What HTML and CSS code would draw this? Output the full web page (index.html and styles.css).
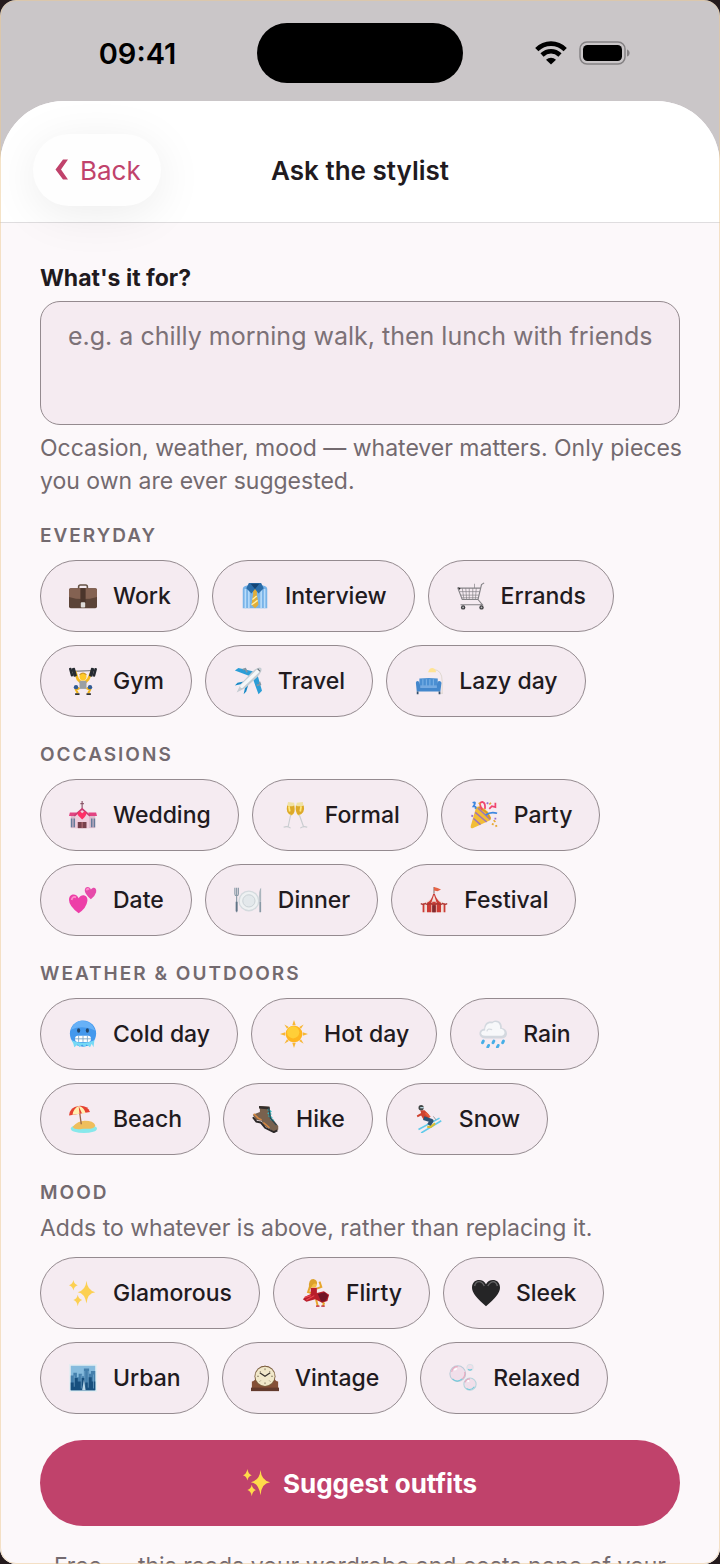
FILE: index.html
```html
<!DOCTYPE html>
<html lang="en">

<head>
  <meta charset="UTF-8">
  <meta name="viewport" content="width=device-width, initial-scale=1.0">
  <title>Ask the stylist</title>
  <link rel="stylesheet" href="styles.css">
</head>

<body>
  <div class="phone">
    <div class="status-bar">
      <div class="status-time">09:41</div>
      <div class="island"></div>
      <div class="status-icons">
        <svg class="wifi" viewBox="0 0 32 24" aria-hidden="true">
          <path d="M1.800 8.600C9.800 .6 22.200 .6 30.200 8.600" fill="none" stroke="#000" stroke-width="4.600" />
          <path d="M7 14C12.300 9 19.700 9 25 14" fill="none" stroke="#000" stroke-width="4.600" />
          <path d="M16 23.500L11 18.700C14 16 18 16 21 18.700Z" />
        </svg>
        <svg class="battery" viewBox="0 0 51 24" aria-hidden="true">
          <rect x="1" y="1" width="45" height="22" rx="7" fill="none" stroke="#858284" stroke-width="1.500" />
          <rect x="4" y="4" width="39" height="16" rx="4.500" />
          <path d="M48 8.500C51.500 9.500 51.500 14.500 48 15.500Z" fill="#858284" />
        </svg>
      </div>
    </div>

    <div class="sheet">
      <header class="header">
        <button class="back" type="button">
          <svg viewBox="0 0 14 22" aria-hidden="true"><path d="M13 .5H8L.5 10.500L8 20.500H13L6 10.500Z" fill="#c0426b" /></svg>
          Back
        </button>
        <h1>Ask the stylist</h1>
      </header>

      <main class="content">
        <label class="label" for="occasion">What's it for?</label>
        <textarea id="occasion" class="prompt" placeholder="e.g. a chilly morning walk, then lunch with friends"></textarea>
        <p class="hint">Occasion, weather, mood — whatever matters. Only pieces you own are ever suggested.</p>

        <section class="group">
          <h2>Everyday</h2>
          <div class="chips">
            <button class="chip" type="button">
              <svg viewBox="0 0 32 32" aria-hidden="true">
                <path d="M11 9V5.500Q11 3.500 13 3.500H19Q21 3.500 21 5.500V9" fill="none" stroke="#665447" stroke-width="1.800" />
                <rect x="0" y="7" width="32" height="23" rx="2" fill="#5b4337" />
                <path d="M0 9Q0 7 2 7H30Q32 7 32 9V17Q16 22 0 17Z" fill="#846252" />
                <rect x="13" y="7" width="6" height="17" fill="#4b352b" />
                <rect x="13.500" y="23" width="5" height="6" rx="1" fill="#dedbd8" />
              </svg>
              Work
            </button>
            <button class="chip" type="button">
              <svg viewBox="0 0 32 32" aria-hidden="true">
                <path d="M2 8Q2 5 7 4L16 2L25 4Q30 5 30 8V30H2Z" fill="#78b3e8" />
                <path d="M5 8V30M9 8V30M23 8V30M27 8V30" stroke="#b9dcfa" stroke-width="1.800" />
                <path d="M13 8L16 6L19 8L18 13L20 26L16 30L12 26L14 13Z" fill="#e1ae38" />
                <path d="M13 20L18 16M12 26L19 21" stroke="#fff0a8" stroke-width="1.600" />
                <path d="M9 1H23L26 7L20 13L16 8L12 13L6 7Z" fill="#2b6da9" />
                <path d="M11 2H21L16 8Z" fill="#154575" />
              </svg>
              Interview
            </button>
            <button class="chip" type="button">
              <svg viewBox="0 0 32 32" aria-hidden="true">
                <g fill="none" stroke="#858387">
                  <path d="M31 1L28 3L24 20H6L1 7H27M4 26H29L24 20" stroke-width="1.300" />
                  <path d="M3 11H26M4 15H25M5 18H25M6 7L8 20M10 7L11 20M14 7V20M18 7V20M22 7L21 20M20 2V7" stroke-width=".8" />
                </g>
                <path d="M1 6L4 7L3 9Z" fill="#222" />
                <g fill="#3d3d40"><circle cx="7" cy="29" r="2.500" /><circle cx="28" cy="29" r="2.500" /></g>
                <g fill="#bbb"><circle cx="7" cy="29" r="1" /><circle cx="28" cy="29" r="1" /></g>
              </svg>
              Errands
            </button>
            <button class="chip" type="button">
              <svg viewBox="0 0 32 32" aria-hidden="true">
                <path d="M3 5L29 4" stroke="#777" stroke-width="1.200" />
                <path d="M7 5L10 14L13 17H19L22 14L26 5" fill="none" stroke="#f4b91d" stroke-width="3" />
                <circle cx="16" cy="11" r="4" fill="#ffc928" />
                <path d="M12 9Q16 5 20 9" fill="none" stroke="#d39a20" stroke-width="1.200" />
                <path d="M12 16H20L20 25H12Z" fill="#9a9fa3" />
                <path d="M12 24L8 26L10 30M20 24L24 26L22 30" fill="none" stroke="#f1b51c" stroke-width="2.500" />
                <path d="M7 31H12M20 31H25" stroke="#333" stroke-width="2" />
                <g fill="#252a31"><rect x="1" y="1" width="3" height="10" rx="1" transform="rotate(-15 2 6)" /><rect x="4" y="1" width="4" height="10" rx="1" transform="rotate(-15 6 6)" /><rect x="24" y="1" width="4" height="10" rx="1" transform="rotate(15 26 6)" /><rect x="28" y="1" width="3" height="10" rx="1" transform="rotate(15 29 6)" /></g>
                <g fill="#315b94"><circle cx="8" cy="23" r="2.500" /><circle cx="24" cy="23" r="2.500" /></g>
              </svg>
              Gym
            </button>
            <button class="chip" type="button">
              <svg viewBox="0 0 32 32" aria-hidden="true">
                <path d="M20 11L1 4L5 1L26 6ZM21 12L28 31L32 27L26 6Z" fill="#2b9ed7" />
                <path d="M10 19L1 21L4 18L14 16ZM13 22L11 31L14 28L17 18Z" fill="#1689c6" />
                <path d="M3 29L8 19L21 5Q28 -1 31 1Q33 4 27 11L13 24Z" fill="#c4ccd2" />
                <path d="M9 22L28 4" stroke="#f5f7f8" stroke-width="4" stroke-linecap="round" />
                <path d="M10 3L13 2L15 6M29 17L30 20L26 21" fill="none" stroke="#8297a5" stroke-width="2" />
                <path d="M27 2L30 5" stroke="#6d7780" stroke-width="1.500" />
              </svg>
              Travel
            </button>
            <button class="chip" type="button">
              <svg viewBox="0 0 32 32" aria-hidden="true">
                <path d="M21 3Q31 3 31 16V30M28 30H32" fill="none" stroke="#ddd5cc" stroke-width="1" />
                <path d="M15 6Q16 1 20 1Q24 2 24 6Z" fill="#ffe394" />
                <path d="M5 13Q16 12 26 13V23H5Z" fill="#4b8fd2" />
                <path d="M9 14V22M13 14V22M17 14V22M21 14V22" stroke="#79b1e6" stroke-width="1.200" />
                <path d="M1 18Q1 16 3 16Q5 16 6 22H25Q25 16 28 16Q31 17 30 20L29 28H2Z" fill="#4387cc" />
                <path d="M6 21H25V24H6Z" fill="#75aae1" />
                <path d="M3 28V31M28 28V31" stroke="#33506d" stroke-width="2" />
              </svg>
              Lazy day
            </button>
          </div>
        </section>

        <section class="group">
          <h2>Occasions</h2>
          <div class="chips">
            <button class="chip" type="button">
              <svg viewBox="0 0 32 32" aria-hidden="true">
                <path d="M15 0V10M13 3H17" stroke="#885567" stroke-width="1.300" />
                <path d="M2 15H30V31H2Z" fill="#dbbccd" /><path d="M7 15L15 8L23 15V31H7Z" fill="#efcddd" />
                <path d="M1 13H9L7 17H0ZM22 13H31L32 17H24Z" fill="#e24482" />
                <path d="M6 17L15 9L24 17" fill="none" stroke="#c93c72" stroke-width="2" />
                <path d="M3 20V30M6 20V30M26 20V30M29 20V30" stroke="#667b9b" stroke-width="1.800" />
                <path d="M15 21L10 16Q9 12 13 12L15 14Q19 10 20 14Q20 17 15 21Z" fill="#ff2f67" />
                <path d="M10 24H20V31H10Z" fill="#78404c" /><path d="M15 24V31" stroke="#c47880" />
              </svg>
              Wedding
            </button>
            <button class="chip" type="button">
              <svg viewBox="0 0 32 32" aria-hidden="true">
                <path d="M8 1L15 2Q18 13 12 17Q4 14 8 1ZM25 1L18 2Q15 13 20 17Q28 14 25 1Z" fill="#f0e2a5" />
                <path d="M7 5Q11 7 15 5Q17 14 12 16Q5 14 7 5ZM17 5Q21 7 26 5Q28 14 20 16Q16 13 17 5Z" fill="#dda929" />
                <path d="M9 6L10 12M23 6L22 12" stroke="#ffe77b" stroke-width="2" />
                <path d="M11 16L8 30M21 16L26 30M3 30Q7 28 11 31M22 31Q26 28 30 30" fill="none" stroke="#c9cdd0" stroke-width="1.300" />
              </svg>
              Formal
            </button>
            <button class="chip" type="button">
              <svg viewBox="0 0 32 32" aria-hidden="true">
                <path d="M7 7Q12 4 20 12Q26 20 23 22L3 31Q0 32 1 28Z" fill="#f2bd36" />
                <path d="M6 13L19 24M4 20L12 27M9 8L23 21" stroke="#a276b4" stroke-width="1.800" />
                <path d="M10 7L19 13L23 20" fill="none" stroke="#d79b24" stroke-width="2" />
                <path d="M18 16Q23 12 31 14M3 2Q8 0 4 6Q8 6 6 9" fill="none" stroke="#3d87e0" stroke-width="2" />
                <path d="M14 10Q9 2 14 1Q18 2 17 9M22 9L25 6L29 7V2" fill="none" stroke="#ef456f" stroke-width="2" />
                <path d="M10 2L12 4M22 4L24 2M27 22L29 24M25 26L27 27M29 29L31 28" stroke="#e7a830" stroke-width="2" />
                <path d="M19 2L21 3M28 20L30 20M2 18L3 16" stroke="#966ed0" stroke-width="2" />
              </svg>
              Party
            </button>
            <button class="chip" type="button">
              <svg viewBox="0 0 32 32" aria-hidden="true">
                <path d="M11 31Q0 23 0 16C0 8 9 8 11 14C14 8 22 10 21 17Q20 25 11 31Z" fill="#ed3fa8" />
                <path d="M25 15Q18 9 18 5C18 0 24 0 25 4C28 0 32 2 31 7Q30 11 25 15Z" fill="#e64aaa" />
                <path d="M3 16Q4 11 8 13M20 5Q21 2 23 4" fill="none" stroke="#ff8bca" stroke-width="2" />
              </svg>
              Date
            </button>
            <button class="chip" type="button">
              <svg viewBox="0 0 32 32" aria-hidden="true">
                <circle cx="17" cy="17" r="12" fill="#d4dade" /><circle cx="17" cy="17" r="10.500" fill="#eef1f2" /><circle cx="17" cy="17" r="7" fill="#e3e8eb" stroke="#c6ced2" />
                <path d="M1 2V9Q1 11 3 11Q5 11 5 9V2M3 2V30" fill="none" stroke="#8999a6" stroke-width="1.300" />
                <path d="M3 18V29" stroke="#607486" stroke-width="2.200" /><path d="M31 2Q28 3 29 18H31Z" fill="#aab5bd" /><path d="M30 18V30" stroke="#8999a6" stroke-width="2" />
              </svg>
              Dinner
            </button>
            <button class="chip" type="button">
              <svg viewBox="0 0 32 32" aria-hidden="true">
                <path d="M16 1V11" stroke="#8b6a61" stroke-width="1.200" /><path d="M16 1Q20 2 24 4L20 6L16 5Z" fill="#e66345" />
                <path d="M16 8Q15 15 3 20V30H29V20Q18 15 16 8Z" fill="#f0dfdb" />
                <path d="M15 9Q13 17 8 19V30H13V19L16 10L19 19V30H24V19Q19 16 17 9ZM3 20H5V30H3ZM27 20H29V30H27ZM14 18H18V30H14Z" fill="#cc3b35" />
                <path d="M1 20Q3 22 6 20Q8 22 12 20Q16 22 20 20Q24 22 26 20Q29 22 31 20" fill="none" stroke="#ad3834" stroke-width="1.600" />
                <path d="M14 22H18V30H14Z" fill="#812b30" />
              </svg>
              Festival
            </button>
          </div>
        </section>

        <section class="group">
          <h2>Weather &amp; outdoors</h2>
          <div class="chips">
            <button class="chip" type="button">
              <svg viewBox="0 0 32 32" aria-hidden="true">
                <circle cx="16" cy="15.500" r="15" fill="#4398ed" /><path d="M2 11Q7 0 16 1Q26 1 30 12Q16 5 2 11Z" fill="#67b1f7" />
                <ellipse cx="11" cy="12" rx="1.800" ry="2.500" fill="#244669" /><ellipse cx="21" cy="12" rx="1.800" ry="2.500" fill="#244669" />
                <path d="M3 23Q16 29 29 23L28 31L26 27L24 31L20 28L18 31L15 28L12 31L10 28L6 31L5 27Z" fill="#76d9f5" />
                <rect x="7" y="18" width="18" height="7" rx="3" fill="#fff" /><path d="M7 21.500H25M11 18V25M16 18V25M21 18V25" stroke="#7da6c6" stroke-width="1" />
              </svg>
              Cold day
            </button>
            <button class="chip" type="button">
              <svg viewBox="0 0 32 32" aria-hidden="true">
                <path d="M16 0L18 6H14ZM27 5L24 10L22 8ZM32 16L26 18V14ZM27 27L22 24L24 22ZM16 32L14 26H18ZM5 27L8 22L10 24ZM0 16L6 14V18ZM5 5L10 8L8 10Z" fill="#f7b636" />
                <circle cx="16" cy="16" r="9.500" fill="#ffb51f" /><circle cx="15" cy="14" r="7" fill="#ffcf38" />
              </svg>
              Hot day
            </button>
            <button class="chip" type="button">
              <svg viewBox="0 0 32 32" aria-hidden="true">
                <path d="M7 21C-2 21-1 10 6 10C6 4 10 1 15 2C21-2 27 3 26 9C34 10 34 21 26 21Z" fill="#d3d8df" />
                <path d="M7 18C1 18 1 12 7 12C7 5 11 3 15 4C20 0 25 4 24 10C30 10 31 17 26 18Z" fill="#f7f8fa" />
                <path d="M9 13Q10 9 15 11" fill="none" stroke="#d8dce2" stroke-width="1.500" />
                <path d="M5 24L4 26M11 29L10 31M17 24L16 26M22 29L21 31M28 24L27 26" stroke="#46aee7" stroke-width="3.200" stroke-linecap="round" />
              </svg>
              Rain
            </button>
            <button class="chip" type="button">
              <svg viewBox="0 0 32 32" aria-hidden="true">
                <ellipse cx="17" cy="27" rx="15" ry="5" fill="#87e8eb" /><path d="M4 25Q10 18 18 18Q28 18 30 23Q30 28 16 27Q7 29 4 25Z" fill="#efbe5c" />
                <path d="M12 7L14 22" stroke="#9b6545" stroke-width="1.500" />
                <path d="M0 12Q1 2 11 1Q21 0 24 8L12 10Z" fill="#e54232" /><path d="M4 11Q5 4 11 1L12 10ZM11 1Q17 2 19 9L15 10Z" fill="#fff0b1" />
              </svg>
              Beach
            </button>
            <button class="chip" type="button">
              <svg viewBox="0 0 32 32" aria-hidden="true">
                <path d="M9 1L20 2L22 14L30 24V28L26 31L13 23L11 18L4 17L1 11L9 8Z" fill="#78614e" />
                <path d="M8 1L20 2L20 5L8 4Z" fill="#332d2b" /><path d="M1 14L5 19L10 20L15 26L25 31L29 29" fill="none" stroke="#2b2728" stroke-width="2.200" />
                <path d="M2 10L7 15L11 17M13 20L20 26" fill="none" stroke="#d88840" stroke-width="1.800" />
                <path d="M18 5L22 8M18 9L22 11M19 12L23 15M21 16L25 18" stroke="#36b5bd" stroke-width="2" />
                <path d="M19 3L21 15L28 23" fill="none" stroke="#2d444d" stroke-width="1.500" />
              </svg>
              Hike
            </button>
            <button class="chip" type="button">
              <svg viewBox="0 0 32 32" aria-hidden="true">
                <path d="M4 28L28 15M7 32L30 18" stroke="#60caea" stroke-width="1.800" />
                <path d="M6 6L11 6L16 11L16 16L10 17L7 12L3 14L2 12L7 9Z" fill="#cf4230" /><circle cx="7" cy="3" r="3" fill="#424646" />
                <path d="M10 15L19 18L16 23" fill="none" stroke="#2d5274" stroke-width="4.500" stroke-linejoin="round" />
                <path d="M14 25H18L23 21" fill="none" stroke="#d8bd31" stroke-width="2.500" /><path d="M21 13L24 17" stroke="#88949a" stroke-width="1" />
                <path d="M12 9L17 14" stroke="#e65b3a" stroke-width="2.500" /><path d="M6 3H10" stroke="#b6d5df" stroke-width="1.500" />
              </svg>
              Snow
            </button>
          </div>
        </section>

        <section class="group">
          <h2>Mood</h2>
          <p class="group-note">Adds to whatever is above, rather than replacing it.</p>
          <div class="chips">
            <button class="chip" type="button">
              <svg viewBox="0 0 32 32" aria-hidden="true"><path d="M20 2Q21 13 30 15Q21 16 20 28Q18 16 10 15Q19 13 20 2ZM5 1Q6 6 10 7Q6 8 5 13Q4 8 0 7Q4 6 5 1ZM10 18Q11 23 15 24Q11 25 10 31Q9 25 5 24Q9 23 10 18Z" fill="#fcd052" /></svg>
              Glamorous
            </button>
            <button class="chip" type="button">
              <svg viewBox="0 0 32 32" aria-hidden="true">
                <path d="M9 9L7 15L11 16M17 11L22 9L20 3M16 23L18 31M21 23L25 28L24 31" fill="none" stroke="#e7a62d" stroke-width="2.300" />
                <path d="M10 10H17L17 16L25 14L31 18L29 25L23 27L15 23L5 26L1 23L4 20L10 17Z" fill="#b91e2c" />
                <path d="M18 17L26 15L30 19L27 25L22 26Z" fill="#711528" />
                <path d="M3 21L10 19M5 24L14 19" stroke="#ec4851" stroke-width="1.300" />
                <circle cx="13" cy="6" r="4" fill="#f5bd42" /><path d="M8 10Q7 0 13 0Q18 1 17 6Q13 3 10 11Z" fill="#dca12c" />
                <path d="M16 31H20M22 31H26" stroke="#bb2135" stroke-width="1.500" />
              </svg>
              Flirty
            </button>
            <button class="chip" type="button">
              <svg viewBox="0 0 32 32" aria-hidden="true"><path d="M16 31Q0 18 0 10C0-1 13-1 16 6C19-1 32-1 32 10Q32 18 16 31Z" fill="#252526" /><path d="M3 8Q4 3 8 3Q12 3 14 8M18 8Q21 3 25 3Q28 4 29 8" fill="none" stroke="#656566" stroke-width="1.500" /></svg>
              Sleek
            </button>
            <button class="chip" type="button">
              <svg viewBox="0 0 32 32" aria-hidden="true">
                <rect width="32" height="32" fill="#e5edf2" /><rect x="2" y="2" width="28" height="28" fill="#86bbdd" />
                <path d="M2 13H5V10H9V15H11V11H15V14H17V5H23V11H25V8H30V30H2Z" fill="#447fac" />
                <path d="M2 21H6V16H10V20H14V16H18V21H22V15H26V20H30V30H2Z" fill="#174f7e" />
                <path d="M18 8V27M22 8V27M6 13V26M14 12V28M28 12V28" stroke="#7eb0d3" stroke-width=".7" /><path d="M15 30L17 18L19 30Z" fill="#b7d4e6" />
              </svg>
              Urban
            </button>
            <button class="chip" type="button">
              <svg viewBox="0 0 32 32" aria-hidden="true">
                <path d="M1 29V20Q4 20 6 15Q7 2 16 2Q25 2 26 15Q28 20 31 20V29Z" fill="#855037" /><path d="M0 27H32V31H0Z" fill="#633a2d" />
                <circle cx="16" cy="14" r="12" fill="#7c6040" /><circle cx="16" cy="14" r="11" fill="#f1e8ca" />
                <path d="M16 5V7M16 21V23M7 14H9M23 14H25M10 8L11 9M22 8L21 9M10 20L11 19M22 20L21 19" stroke="#776a53" stroke-width="1" /><path d="M10 10L16 14L22 10" fill="none" stroke="#342f2b" stroke-width="1.300" />
              </svg>
              Vintage
            </button>
            <button class="chip" type="button">
              <svg viewBox="0 0 32 32" aria-hidden="true">
                <g fill="#f1dfea" stroke-width="1.200"><circle cx="10" cy="11" r="9" stroke="#b9cbd8" /><circle cx="24" cy="23" r="7" stroke="#b5d4dc" /><circle cx="24" cy="4" r="3.500" stroke="#d8e2e7" /></g>
                <path d="M4 17Q9 22 15 17M20 28Q25 31 29 26M22 6Q24 8 26 6" fill="none" stroke="#72cadb" stroke-width="1.300" />
                <path d="M3 9Q4 3 10 3M18 21Q20 17 24 17M18 9Q19 14 15 17" fill="none" stroke="#e7a9bf" stroke-width="1.300" /><path d="M6 7L9 5M21 20L23 19" stroke="#fff" stroke-width="2" />
              </svg>
              Relaxed
            </button>
          </div>
        </section>

        <button class="suggest" type="button">
          <svg viewBox="0 0 32 32" aria-hidden="true"><path d="M20 1Q21 13 31 15Q21 16 20 30Q18 16 9 15Q19 13 20 1ZM5 0Q6 6 10 7Q6 8 5 13Q4 8 0 7Q4 6 5 0ZM10 18Q11 23 15 24Q11 25 10 31Q9 25 5 24Q9 23 10 18Z" fill="#ffdb4a" /></svg>
          Suggest outfits
        </button>
        <p class="footnote">Free — this reads your wardrobe and costs none of your</p>
      </main>
    </div>
  </div>
</body>

</html>
```
FILE: styles.css
```css
* {
  box-sizing: border-box;
}

body {
  margin: 0;
  background: #241a1c;
  color: #211a1e;
  font-family: Inter, "Liberation Sans", sans-serif;
}

h1, h2, p {
  margin: 0;
}

button, textarea {
  font-family: inherit;
}

.phone {
  position: relative;
  display: flex;
  flex-direction: column;
  height: 100vh;
  overflow: hidden;
  border-radius: 16px;
  background: #cac6c8;
}

/* thin warm edge of the device */
.phone::after {
  content: '';
  position: absolute;
  inset: 0;
  border: 1px solid rgba(235, 199, 143, 0.5);
  border-radius: 16px;
  pointer-events: none;
}

.status-bar {
  display: grid;
  grid-template-columns: 1fr auto 1fr;
  align-items: center;
  justify-items: center;
  padding: 23px 18px 18px;
  color: #000;
}

.status-time {
  font-size: 29px;
  font-weight: 600;
}

.island {
  width: 206px;
  height: 60px;
  border-radius: 30px;
  background: #000;
}

.status-icons {
  display: flex;
  align-items: center;
  gap: 12px;
}

.wifi {
  width: 32px;
  height: 24px;
}

.battery {
  width: 51px;
  height: 24px;
}

.sheet {
  display: flex;
  flex: 1;
  flex-direction: column;
  min-height: 0;
  border-radius: 64px 64px 0 0;
  background: #fcf8fa;
}

.header {
  position: relative;
  display: grid;
  grid-template-columns: 1fr auto 1fr;
  align-items: center;
  padding: 33px 33px 16px;
  border-bottom: 1px solid #dfdddf;
  border-radius: 64px 64px 0 0;
  background: #fff;
}

.header h1 {
  font-size: 26px;
  font-weight: 600;
}

.back {
  display: flex;
  align-items: center;
  justify-self: start;
  gap: 11px;
  height: 72px;
  padding: 0 20px 0 22px;
  border: 0;
  border-radius: 36px;
  background: #fefefe;
  box-shadow: 0 8px 48px rgba(0, 0, 0, 0.08);
  color: #c0426b;
  font-size: 26px;
}

.back svg {
  width: 14px;
  height: 22px;
}

.content {
  flex: 1;
  min-height: 0;
  overflow-y: auto;
  padding: 39px 40px 0;
  scrollbar-width: none;
}

.label {
  display: block;
  font-size: 23px;
  font-weight: 700;
  line-height: 33px;
}

.prompt {
  display: block;
  width: 100%;
  height: 124px;
  margin-top: 6px;
  padding: 18px 16px 18px 27px;
  border: 1px solid #948a8f;
  border-radius: 20px;
  background: #f5ebf1;
  color: #211a1e;
  font-size: 25px;
  line-height: 32px;
  resize: none;
}

.prompt::placeholder {
  color: #7c7177;
  opacity: 1;
}

.hint, .group-note, .footnote {
  color: #736a6f;
  font-size: 23px;
  line-height: 33px;
}

.hint, .group-note {
  margin-top: 7px;
}

.hint {
  margin-right: -8px;
}

.group {
  margin-top: 26px;
}

.group h2 {
  color: #736a6f;
  font-size: 19px;
  font-weight: 600;
  line-height: 24px;
  letter-spacing: 2px;
  text-transform: uppercase;
}

.chips {
  display: flex;
  flex-wrap: wrap;
  gap: 13px;
  margin-top: 12px;
}

.chip {
  display: flex;
  align-items: center;
  gap: 16px;
  height: 72px;
  padding: 0 27px 0 28px;
  border: 1px solid #948a8f;
  border-radius: 36px;
  background: #f5ebf1;
  color: #211a1e;
  font-size: 23px;
  font-weight: 500;
}

.chip svg, .suggest svg {
  width: 28px;
  height: 28px;
}

.suggest {
  display: flex;
  align-items: center;
  justify-content: center;
  gap: 12px;
  width: 100%;
  height: 86px;
  margin-top: 26px;
  border: 0;
  border-radius: 43px;
  background: #c0426b;
  color: #fff;
  font-size: 26px;
  font-weight: 700;
}

.footnote {
  margin-top: 24px;
  text-align: center;
  white-space: nowrap;
}
```
